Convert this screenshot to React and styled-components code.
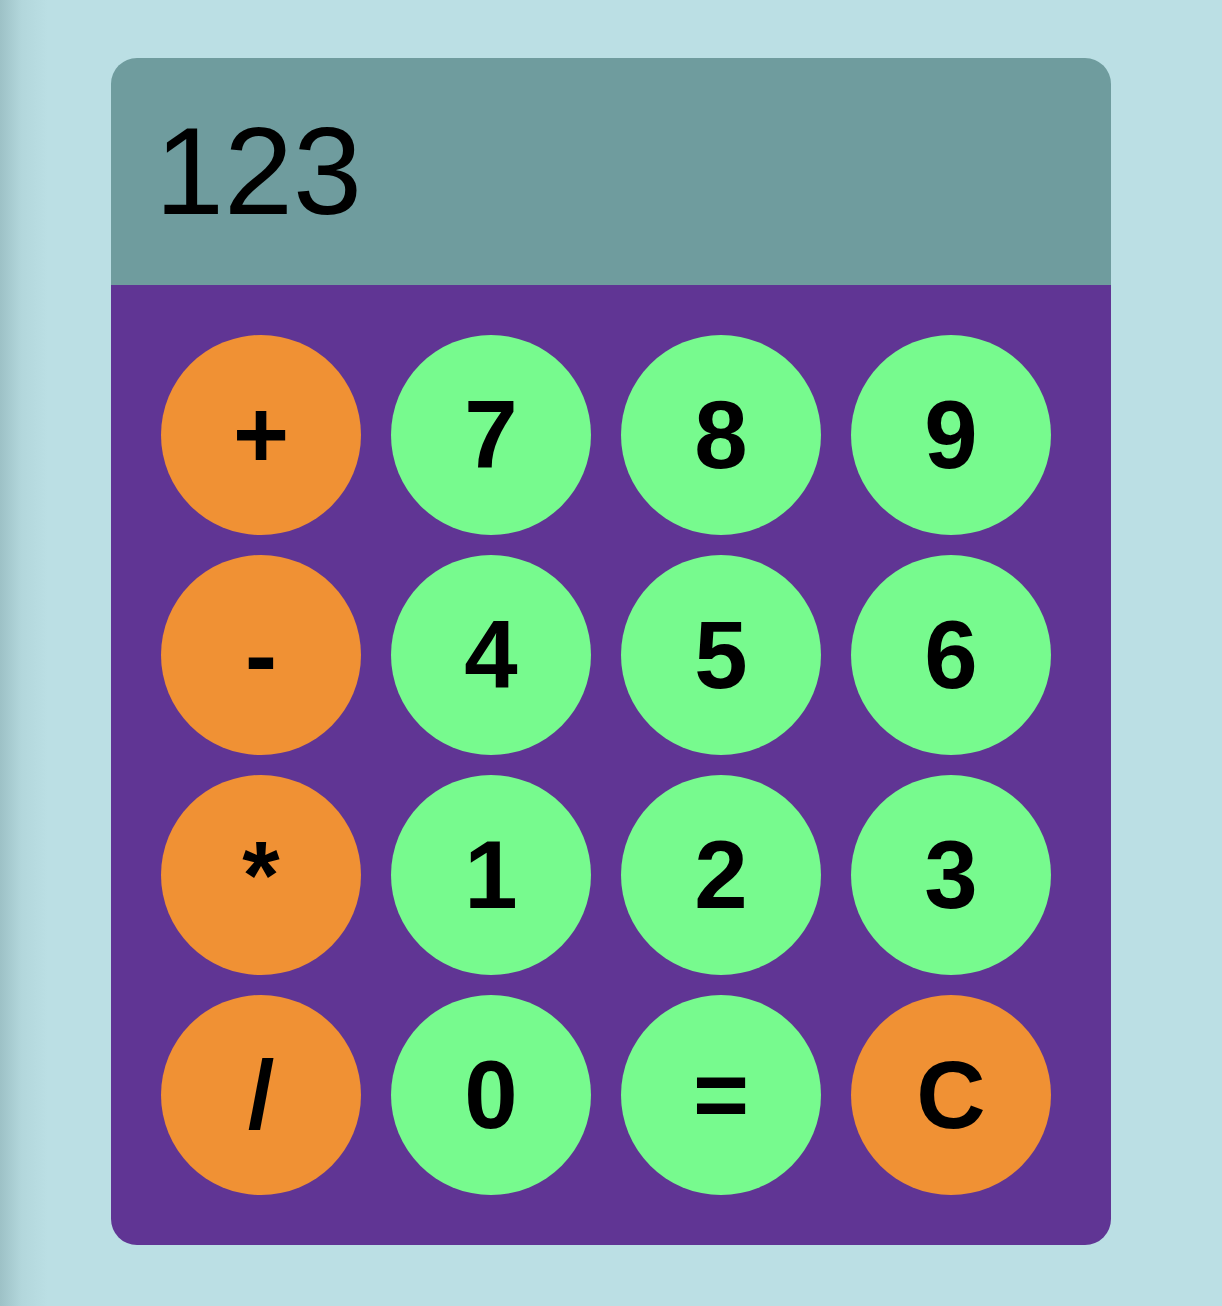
import React from 'react';
import styled, { createGlobalStyle } from 'styled-components';

const GlobalStyle = createGlobalStyle`
    html, body {
        margin: 0;
        padding: 0;
    }
    body {
        min-height: 1306px;
        font-family: "Liberation Sans", Arial, sans-serif;
        background: linear-gradient(to right, #9dc1c6 0px, #b3d7dc 22px, #bbdfe4 48px, #bbdfe4 100%);
    }
`;

const Page = styled.div`
    padding: 58px 0 0 111px;
`;

const Calculator = styled.div`
    width: 1000px;
    border-radius: 26px;
    overflow: hidden;
`;

const Display = styled.div`
    background-color: #6f9c9e;
    padding: 40px 44px;
    font-size: 124px;
    line-height: 147px;
    color: #000;
`;

const Keypad = styled.div`
    background-color: #603594;
    padding: 50px;
    display: grid;
    grid-template-columns: repeat(4, 200px);
    column-gap: 30px;
    row-gap: 20px;
`;

const Key = styled.button`
    width: 200px;
    height: 200px;
    border-radius: 50%;
    border: none;
    padding: 0;
    background-color: ${props => props.$op ? '#f09134' : '#77fa8e'};
    font-family: "Liberation Sans", Arial, sans-serif;
    font-weight: 700;
    font-size: 96px;
    color: #000;
    display: flex;
    align-items: center;
    justify-content: center;
    cursor: pointer;
`;

const keys = [
    ['+', true], ['7'], ['8'], ['9'],
    ['-', true], ['4'], ['5'], ['6'],
    ['*', true], ['1'], ['2'], ['3'],
    ['/', true], ['0'], ['='], ['C', true],
];

function App() {
    return (
        <>
            <GlobalStyle />
            <Page>
                <Calculator>
                    <Display>123</Display>
                    <Keypad>
                        {keys.map(([label, op]) => (
                            <Key key={label} $op={op}>{label}</Key>
                        ))}
                    </Keypad>
                </Calculator>
            </Page>
        </>
    );
}

export default App;
